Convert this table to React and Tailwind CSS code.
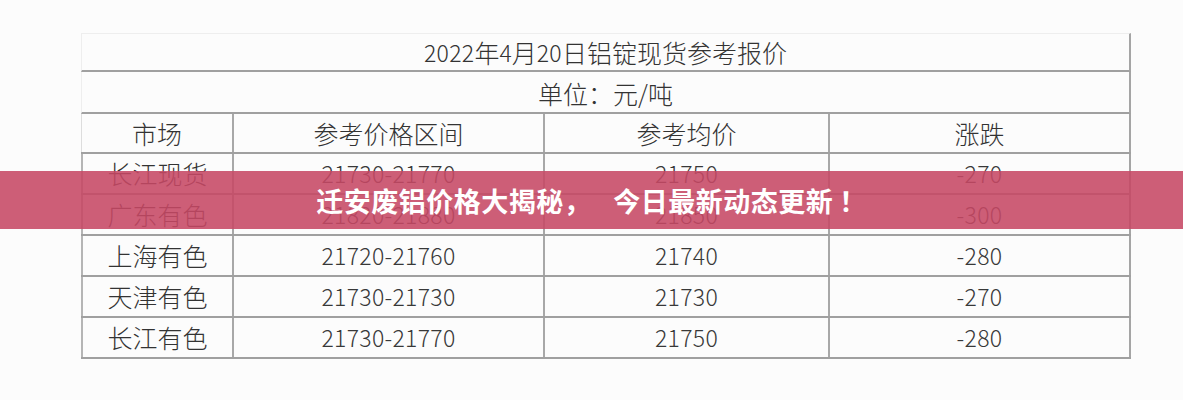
import React from "react";

const CJK = { fontFamily: '"Noto Sans CJK SC", "Noto Sans", sans-serif' };

const rows = [
  ["长江现货", "21730-21770", "21750", "-270"],
  ["广东有色", "21820-21880", "21850", "-300"],
  ["上海有色", "21720-21760", "21740", "-280"],
  ["天津有色", "21730-21730", "21730", "-270"],
  ["长江有色", "21730-21770", "21750", "-280"],
];

function Num({ children }) {
  return (
    <span className="text-[23px] font-light tracking-[0.3px] text-[#383838]">
      {children}
    </span>
  );
}

export default function App() {
  return (
    <div
      className="relative w-[1183px] h-[400px] overflow-hidden bg-[#fcfcfc] text-[#333]"
      style={CJK}
    >
      <div className="ml-[81px] pt-[33px] w-[1050px]">
        <div className="h-[39px] border-t border-l border-t-[#eeeeee] border-l-[#eeeeee] border-r-2 border-r-[#a5a5a5] border-b-2 border-b-[#a0a0a0] flex items-center justify-center text-[25px] font-light leading-none">
          <span className="text-[23px] tracking-[0.3px]">2022</span>
          <span>年</span>
          <span className="text-[23px]">4</span>
          <span>月</span>
          <span className="text-[23px] tracking-[0.3px]">20</span>
          <span>日铝锭现货参考报价</span>
        </div>
        <div className="h-[42px] border-l border-l-[#eeeeee] border-r-2 border-r-[#a5a5a5] border-b-2 border-b-[#a0a0a0] flex items-center justify-center text-[25px] font-light leading-none pt-[2px]">
          单位：元/吨
        </div>
        <div className="grid grid-cols-[153px_311px_285px_1fr] h-[40px] border-b-2 border-b-[#a0a0a0] text-[25px] font-light leading-none">
          <div className="border-l border-l-[#dddddd] border-r-2 border-r-[#a8a8a8] flex items-center justify-center">市场</div>
          <div className="border-r-2 border-r-[#a8a8a8] flex items-center justify-center">参考价格区间</div>
          <div className="border-r-2 border-r-[#a8a8a8] flex items-center justify-center">参考均价</div>
          <div className="border-r-2 border-r-[#a5a5a5] flex items-center justify-center">涨跌</div>
        </div>
        {rows.map((r, i) => (
          <div
            key={i}
            className="grid grid-cols-[153px_311px_285px_1fr] h-[41px] border-b-2 border-b-[#a0a0a0] leading-none"
          >
            <div className="border-l-2 border-l-[#b5b5b5] border-r-2 border-r-[#a8a8a8] flex items-center justify-center text-[25px] font-light">
              {r[0]}
            </div>
            <div className="border-r-2 border-r-[#a8a8a8] flex items-center justify-center">
              <Num>{r[1]}</Num>
            </div>
            <div className="border-r-2 border-r-[#a8a8a8] flex items-center justify-center">
              <Num>{r[2]}</Num>
            </div>
            <div className="border-r-2 border-r-[#a5a5a5] flex items-center justify-center">
              <Num>{r[3]}</Num>
            </div>
          </div>
        ))}
      </div>

      <div className="absolute left-0 top-[171px] w-full h-[58px] bg-[rgba(198,72,100,0.88)] flex items-center justify-center">
        <span className="text-white font-bold text-[27px] tracking-[0.5px] leading-none">
          迁安废铝价格大揭秘，<span className="inline-block w-[22px]"></span>今日最新动态更新<span className="inline-block ml-[6px]">！</span>
        </span>
      </div>
    </div>
  );
}
